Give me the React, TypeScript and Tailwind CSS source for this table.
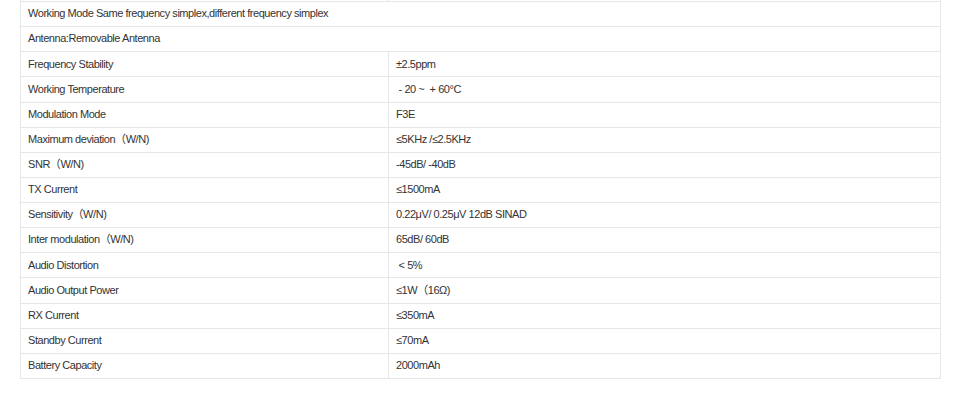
import React from "react";

const rows: [string, string | null][] = [
  ["Working Mode Same frequency simplex,different frequency simplex", null],
  ["Antenna:Removable Antenna", null],
  ["Frequency Stability", "±2.5ppm"],
  ["Working Temperature", " - 20 ~  + 60°C"],
  ["Modulation Mode", "F3E"],
  ["Maximum deviation（W/N)", "≤5KHz /≤2.5KHz"],
  ["SNR（W/N)", "-45dB/ -40dB"],
  ["TX Current", "≤1500mA"],
  ["Sensitivity（W/N)", "0.22μV/ 0.25μV 12dB SINAD"],
  ["Inter modulation（W/N)", "65dB/ 60dB"],
  ["Audio Distortion", " < 5%"],
  ["Audio Output Power", "≤1W（16Ω)"],
  ["RX Current", "≤350mA"],
  ["Standby Current", "≤70mA"],
  ["Battery Capacity", "2000mAh"],
];

export default function App() {
  return (
    <div
      className="w-[960px] h-[411px] bg-white overflow-hidden"
      style={{ fontFamily: '"Liberation Sans", "Noto Sans CJK SC", sans-serif' }}
    >
      <div className="mx-[20px] w-[921px] border-l border-r border-[#e6e6e6]">
        <div className="h-px flex">
          <div className="w-[368px] border-r border-[#e6e6e6]" />
        </div>
        {rows.map(([k, v], i) => (
          <div
            key={i}
            className="flex h-[25.13px] border-t border-[#e6e6e6] text-[11px] text-[#333] whitespace-pre tracking-[-0.45px]"
          >
            {v === null ? (
              <div className="flex items-center pl-[7px] pb-px">{k}</div>
            ) : (
              <>
                <div className="w-[368px] flex items-center pl-[7px] pb-px border-r border-[#e6e6e6]">{k}</div>
                <div className="flex items-center pl-[7px] pb-px">{v}</div>
              </>
            )}
          </div>
        ))}
        <div className="border-t border-[#e6e6e6]" />
      </div>
    </div>
  );
}
